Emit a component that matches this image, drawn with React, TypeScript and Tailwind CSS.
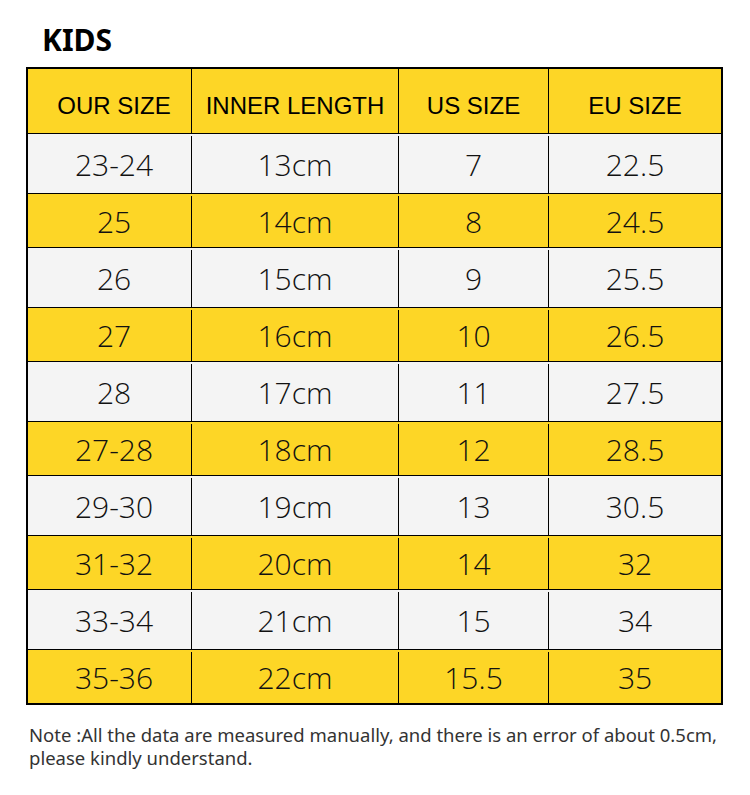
import React from "react";

const rows: [string, string, string, string][] = [
  ["23-24", "13cm", "7", "22.5"],
  ["25", "14cm", "8", "24.5"],
  ["26", "15cm", "9", "25.5"],
  ["27", "16cm", "10", "26.5"],
  ["28", "17cm", "11", "27.5"],
  ["27-28", "18cm", "12", "28.5"],
  ["29-30", "19cm", "13", "30.5"],
  ["31-32", "20cm", "14", "32"],
  ["33-34", "21cm", "15", "34"],
  ["35-36", "22cm", "15.5", "35"],
];

export default function App() {
  return (
    <div className="w-[750px] h-[795px] bg-white overflow-hidden">
      <div className="pt-[25px] pl-[42px] h-[67px]">
        <div
          className="text-[30px] leading-none font-bold text-black"
          style={{ fontFamily: '"Noto Sans", "Open Sans", sans-serif' }}
        >
          KIDS
        </div>
      </div>
      <div className="ml-[26px] w-[697px] border-2 border-black">
        <div
          className="flex h-[65px] bg-[#fdd626] border-b border-black text-[24px] text-black"
          style={{ fontFamily: '"Liberation Sans", Arial, sans-serif' }}
        >
          <div className="w-[164px] border-r border-black flex items-center justify-center pt-[10px] pl-[9px]">OUR SIZE</div>
          <div className="w-[207px] border-r border-black flex items-center justify-center pt-[10px]">INNER LENGTH</div>
          <div className="w-[150px] border-r border-black flex items-center justify-center pt-[10px]">US SIZE</div>
          <div className="flex-1 flex items-center justify-center pt-[10px]">EU SIZE</div>
        </div>
        {rows.map((r, i) => {
          const yellow = i % 2 === 1;
          const last = i === rows.length - 1;
          return (
            <div
              key={i}
              className={
                "flex text-[30px] font-light text-[#111] pt-[2px] " +
                (yellow ? "bg-[#fdd626] " : "bg-[#f4f4f4] ") +
                (last ? "h-[53px]" : yellow ? "h-[54px] border-b border-black" : "h-[60px] border-b border-black")
              }
              style={{ fontFamily: '"Open Sans", "Noto Sans", sans-serif' }}
            >
              <div className="w-[164px] border-r border-black flex items-center justify-center pl-[9px]">{r[0]}</div>
              <div className="w-[207px] border-r border-black flex items-center justify-center">{r[1]}</div>
              <div className="w-[150px] border-r border-black flex items-center justify-center">{r[2]}</div>
              <div className="flex-1 flex items-center justify-center">{r[3]}</div>
            </div>
          );
        })}
      </div>
      <div
        className="pl-[29px] pt-[18px] text-[18.5px] leading-[23px] text-[#333] whitespace-nowrap"
        style={{ fontFamily: '"Noto Sans", "Open Sans", sans-serif' }}
      >
        Note :All the data are measured manually, and there is an error of about 0.5cm,
        <br />
        please kindly understand.
      </div>
    </div>
  );
}
